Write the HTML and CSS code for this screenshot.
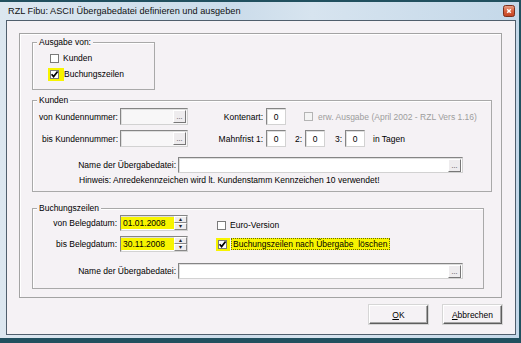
FILE: index.html
```html
<!DOCTYPE html>
<html lang="de">
<head>
  <meta charset="UTF-8" />
  <title>RZL Fibu</title>
  <link rel="stylesheet" href="styles.css">
</head>
<body>
  <div class="window">
    <div class="titlebar">
      <span class="title">RZL Fibu: ASCII Übergabedatei definieren und ausgeben</span>
      <span class="close">
        <svg width="12" height="12" viewBox="0 0 12 12">
          <defs>
            <linearGradient id="closeGrad" x1="0" y1="0" x2="0" y2="1">
              <stop offset="0" stop-color="#eaa58c" />
              <stop offset="0.5" stop-color="#d8623f" />
              <stop offset="1" stop-color="#c2411f" />
            </linearGradient>
          </defs>
          <rect x="0.5" y="0.5" width="11" height="11" rx="2" fill="url(#closeGrad)" stroke="#7b2f1c" />
          <path d="M4.2 4.2 L7.8 7.8 M7.8 4.2 L4.2 7.8" stroke="#fff" stroke-width="1.5" />
        </svg>
      </span>
    </div>

    <div class="client">
      <div class="panel">

        <!-- Ausgabe von -->
        <div class="group group-ausgabe">
          <span class="group-title">Ausgabe von:</span>
          <label class="check-row">
            <span class="check"></span>
            <span class="check-text">Kunden</span>
          </label>
          <label class="check-row">
            <span class="hl-box">
              <span class="check"><svg width="9" height="9" viewBox="0 0 9 9"><path d="M1.6 4.2 L3.6 6.6 L7.6 1.4" fill="none" stroke="#000" stroke-width="1.7" /></svg></span>
            </span>
            <span>Buchungszeilen</span>
          </label>
        </div>

        <!-- Kunden -->
        <div class="group group-kunden">
          <span class="group-title">Kunden</span>
          <div class="row">
            <span class="lbl lbl-nr">von Kundennummer:</span>
            <span class="field field-nr"><span class="browse">...</span></span>
            <span class="lbl lbl-k">Kontenart:</span>
            <span class="field num">0</span>
            <span class="check check-disabled"></span>
            <span class="muted">erw. Ausgabe (April 2002 - RZL Vers 1.16)</span>
          </div>
          <div class="row row-gap">
            <span class="lbl lbl-nr">bis Kundennummer:</span>
            <span class="field field-nr"><span class="browse">...</span></span>
            <span class="lbl lbl-k">Mahnfrist 1:</span>
            <span class="field num">0</span>
            <span class="num-lbl num-lbl-2">2:</span>
            <span class="field num">0</span>
            <span class="num-lbl num-lbl-3">3:</span>
            <span class="field num">0</span>
            <span class="tage">in Tagen</span>
          </div>
          <div class="row row-file">
            <span class="lbl lbl-file">Name der Übergabedatei:</span>
            <span class="field field-file"><span class="browse">...</span></span>
          </div>
          <div class="hint">Hinweis: Anredekennzeichen wird lt. Kundenstamm Kennzeichen 10 verwendet!</div>
        </div>

        <!-- Buchungszeilen -->
        <div class="group group-buchung">
          <span class="group-title">Buchungszeilen</span>
          <div class="row row-date">
            <span class="lbl lbl-date">von Belegdatum:</span>
            <span class="field date">
              <span class="date-val">01.01.2008</span>
              <span class="spin"><span class="spin-btn">&#9652;</span><span class="spin-btn">&#9662;</span></span>
            </span>
            <span class="check check-euro"></span>
            <span class="check-text">Euro-Version</span>
          </div>
          <div class="row row-date row-gap">
            <span class="lbl lbl-date">bis Belegdatum:</span>
            <span class="field date">
              <span class="date-val">30.11.2008</span>
              <span class="spin"><span class="spin-btn">&#9652;</span><span class="spin-btn">&#9662;</span></span>
            </span>
            <span class="hl-box hl-box-delete">
              <span class="check"><svg width="9" height="9" viewBox="0 0 9 9"><path d="M1.6 4.2 L3.6 6.6 L7.6 1.4" fill="none" stroke="#000" stroke-width="1.7" /></svg></span>
            </span>
            <span class="hl-text">Buchungszeilen nach Übergabe&nbsp; löschen</span>
          </div>
          <div class="row row-file row-file-b">
            <span class="lbl lbl-file">Name der Übergabedatei:</span>
            <span class="field field-file"><span class="browse">...</span></span>
          </div>
        </div>

      </div>

      <div class="buttons">
        <button class="btn" type="button"><u>O</u>K</button>
        <button class="btn" type="button"><u>A</u>bbrechen</button>
      </div>
    </div>
  </div>
</body>
</html>
```

FILE: styles.css
```css
body {
  margin: 0;
  background: #21505f;
  font-family: "Liberation Sans", Arial, sans-serif;
  font-size: 8.5px;
  color: #000;
}
/* Window frame */
.window {
  width: 519px;
  height: 336px;
  margin-top: 2px;
  display: flex;
  flex-direction: column;
  background: linear-gradient(90deg, #dce7f0 0, #cbdcea 45%, #d7e4ef 60%, #c4d8e9 100%);
}
.titlebar {
  height: 18px;
  display: flex;
  align-items: center;
  padding: 0 4px 0 8px;
}
.title {
  font-size: 9.2px;
  color: #111;
}
.close {
  margin-left: auto;
  width: 12px;
  height: 12px;
  display: flex;
}
.client {
  margin: 0 3px 0 6px;
  height: 315px;
  box-sizing: border-box;
  border: 1px solid #505f6d;
  background: #f5f2f5;
}
/* Etched panel */
.panel {
  margin: 12px 13px 0 12px;
  height: 265px;
  box-sizing: border-box;
  border: 1px solid #a3a3a3;
  box-shadow: inset 1px 1px #fff;
  padding: 8px 0 0 12px;
}
.group {
  position: relative;
  box-sizing: border-box;
  border: 1px solid #a9a9a9;
  box-shadow: inset 1px 1px #fff;
}
.group-title {
  position: absolute;
  top: -6px;
  left: 4px;
  padding: 0 2px;
  line-height: 10px;
  background: #f5f2f5;
}
.group-ausgabe {
  width: 123px;
  height: 48px;
  padding: 8px 0 0 17px;
}
.group-kunden {
  width: 460px;
  height: 92px;
  margin-top: 10px;
  padding-top: 7px;
}
.group-buchung {
  width: 452px;
  height: 81px;
  margin-top: 16px;
  padding-top: 6px;
}
/* Checkboxes */
.check-row {
  display: flex;
  align-items: center;
  height: 14px;
}
.check-row + .check-row {
  margin-top: 2px;
}
.check {
  width: 9px;
  height: 9px;
  box-sizing: border-box;
  border: 1px solid #7a7a7a;
  background: #fff;
  display: flex;
  flex-shrink: 0;
  overflow: visible;
}
.check svg {
  margin: -1px 0 0 -1px;
  overflow: visible;
}
.check-text {
  margin-left: 4px;
}
.hl-box {
  display: flex;
  background: #f7f400;
  padding: 2px 5px 2px 2px;
  margin-left: -2px;
}
.check-disabled {
  margin-left: 18px;
  border-color: #b4b4b4;
  background: #f4f4f4;
}
.muted {
  margin-left: 5px;
  color: #9d9d9d;
}
/* Rows and fields */
.row {
  display: flex;
  align-items: center;
  height: 17px;
}
.row-gap {
  margin-top: 5px;
}
.lbl {
  text-align: right;
  white-space: nowrap;
}
.lbl-nr {
  width: 85px;
  margin-right: 2px;
}
.lbl-k {
  width: 75px;
  margin-right: 3px;
}
.field {
  box-sizing: border-box;
  height: 17px;
  border: 1px solid;
  border-color: #858585 #d2d2d2 #d2d2d2 #858585;
  box-shadow: inset 1px 1px #dedede;
  background: #fff;
  display: flex;
  align-items: center;
}
.field-nr {
  width: 68px;
  background: #f8f7f8;
}
.num {
  width: 20px;
  justify-content: center;
}
.num-lbl {
  width: 8px;
  margin-right: 2px;
}
.num-lbl-2 {
  margin-left: 9px;
}
.num-lbl-3 {
  margin-left: 10px;
}
.tage {
  margin-left: 8px;
}
.browse {
  margin-left: auto;
  margin-right: 1px;
  width: 13px;
  height: 13px;
  box-sizing: border-box;
  border: 1px solid;
  border-color: #fff #777 #777 #fff;
  background: #eeecee;
  font-size: 7px;
  line-height: 12px;
  text-align: center;
  color: #333;
}
.row-file {
  height: 16px;
  margin-top: 10px;
}
.row-file .field {
  height: 16px;
}
.row-file-b {
  margin-top: 11px;
}
.lbl-file {
  width: 143px;
  margin-right: 2px;
}
.field-file {
  width: 285px;
}
.hint {
  margin-top: 2px;
  padding-left: 46px;
  line-height: 10px;
}
/* Belegdatum */
.row-date {
  height: 16px;
}
.lbl-date {
  width: 84px;
  margin-right: 3px;
}
.field.date {
  width: 68px;
  height: 16px;
}
.date-val {
  align-self: stretch;
  width: 53px;
  margin: 1px 0 1px 0;
  padding-left: 2px;
  box-sizing: border-box;
  background: #f7f400;
  line-height: 12px;
}
.spin {
  margin-left: auto;
  width: 13px;
  height: 14px;
  display: flex;
  flex-direction: column;
}
.spin-btn {
  flex: 1;
  box-sizing: border-box;
  border: 1px solid;
  border-color: #fff #888 #888 #fff;
  background: #eeecee;
  font-size: 6px;
  line-height: 5px;
  text-align: center;
  color: #222;
}
.check-euro {
  margin-left: 29px;
  margin-top: 4px;
}
.row-date .check-text {
  margin-top: 4px;
}
.hl-box-delete {
  margin-left: 28px;
  padding: 2px 3px 2px 2px;
}
.hl-text {
  background: #f7f400;
  border: 1px dotted #6b6b00;
  line-height: 10px;
  padding: 0 1px;
  margin-left: 1px;
}
/* Buttons */
.buttons {
  display: flex;
  justify-content: flex-end;
  gap: 15px;
  margin: 7px 13px 0 0;
}
.btn {
  width: 59px;
  height: 19px;
  padding: 0;
  font-family: "Liberation Sans", Arial, sans-serif;
  font-size: 8.5px;
  color: #000;
  background: #f5f2f5;
  border: 1px solid;
  border-color: #fff #5e5e5e #5e5e5e #fff;
  box-shadow: inset -1px -1px #a6a6a6, 0 0 0 1px #d6d6d6;
}
```
